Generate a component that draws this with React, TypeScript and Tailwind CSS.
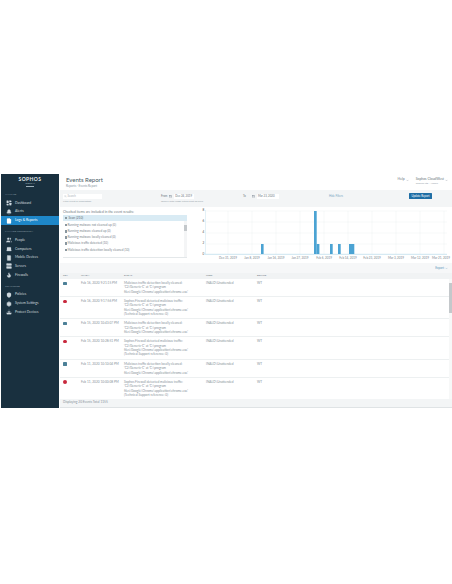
import { Bell, Laptop, LayoutDashboard, FileText, Flame, Server, Settings, Shield, Smartphone, Users, Download, ChevronDown, Search, Calendar } from "lucide-react";

const nav = [
  {
    title: "ANALYZE",
    items: [
      { label: "Dashboard", icon: LayoutDashboard },
      { label: "Alerts", icon: Bell },
      { label: "Logs & Reports", icon: FileText, active: true },
    ],
  },
  {
    title: "MANAGE PROTECTION",
    items: [
      { label: "People", icon: Users },
      { label: "Computers", icon: Laptop },
      { label: "Mobile Devices", icon: Smartphone },
      { label: "Servers", icon: Server },
      { label: "Firewalls", icon: Flame },
    ],
  },
  {
    title: "CONFIGURE",
    items: [
      { label: "Policies", icon: Shield },
      { label: "System Settings", icon: Settings },
      { label: "Protect Devices", icon: Download },
    ],
  },
];

const checks = [
  { label: "Running malware not cleaned up (0)", on: false },
  { label: "Running malware cleaned up (0)", on: false },
  { label: "Running malware locally cleaned (0)", on: false },
  { label: "Malicious traffic detected (10)", on: true },
  { label: "Malicious traffic detection locally cleaned (10)", on: true },
];

const cleaned = [
  "Malicious traffic detection locally cleaned:",
  "'C2/Generic-C' at 'C:\\program",
  "files\\Google\\Chrome\\application\\chrome.exe'",
];
const detected = [
  "Sophos Firewall detected malicious traffic:",
  "'C2/Generic-C' at 'C:\\program",
  "files\\Google\\Chrome\\application\\chrome.exe'",
  "(Technical Support reference: 0)",
];

const rows = [
  { date: "Feb 16, 2020 9:21:15 PM", kind: "clean" },
  { date: "Feb 16, 2020 9:17:56 PM", kind: "bad" },
  { date: "Feb 15, 2020 10:43:07 PM", kind: "clean" },
  { date: "Feb 15, 2020 10:28:51 PM", kind: "bad" },
  { date: "Feb 11, 2020 10:10:04 PM", kind: "clean" },
  { date: "Feb 11, 2020 10:00:08 PM", kind: "bad" },
];

const dates = ["Dec 31, 2019", "Jan 8, 2019", "Jan 16, 2019", "Jan 27, 2019", "Feb 6, 2019", "Feb 14, 2019", "Feb 23, 2019", "Mar 3, 2019", "Mar 12, 2019", "Mar 21, 2019"];
const bars = [
  [262, 2.6, 10],
  [315, 2.7, 43],
  [317.7, 2.7, 10],
  [331, 2.7, 10],
  [339, 2.7, 10],
  [350, 5.3, 10],
];

function Chart() {
  return (
    <svg viewBox="203 210 249 54" className="h-[54px] w-[249px]">
      {[214, 225, 236, 247].map((y) => (
        <line key={y} x1="207" x2="448" y1={y} y2={y} stroke="#eceff1" strokeWidth="0.4" />
      ))}
      {[229, 253, 277, 301, 325, 349, 373, 397, 421, 445].map((x) => (
        <line key={x} x1={x} x2={x} y1="214" y2="257" stroke="#eceff1" strokeWidth="0.4" />
      ))}
      <line x1="206.5" x2="206.5" y1="213" y2="257" stroke="#c9e3ef" strokeWidth="0.5" />
      <line x1="206" x2="448" y1="257.3" y2="257.3" stroke="#a9d3e6" strokeWidth="0.6" />
      {bars.map(([x, w, h]) => (
        <rect key={x} x={x} y={257 - h} width={w} height={h} fill="#4ba3d3" />
      ))}
      {[
        ["8", 214],
        ["6", 225],
        ["4", 236],
        ["2", 247],
        ["0", 258],
      ].map(([t, y]) => (
        <text key={t} x="203.5" y={y} fontSize="3" fill="#555" fontFamily="Lato, sans-serif">
          {t}
        </text>
      ))}
      {dates.map((d, i) => (
        <text
          key={d}
          x={i === 9 ? 451 : 229 + i * 24}
          y="261.5"
          fontSize="3"
          textAnchor={i === 9 ? "end" : "middle"}
          fill="#7a868e"
          fontFamily="Lato, sans-serif"
        >
          {d}
        </text>
      ))}
    </svg>
  );
}

export default function App() {
  return (
    <div className="h-[584px] w-[452px] overflow-hidden bg-white pt-[174px] font-['Lato',sans-serif]">
      <div className="flex h-[234px]">
        {/* Sidebar */}
        <aside className="ml-px flex h-full w-[58px] shrink-0 flex-col bg-[#19303f] text-[#cfd8de]">
          <div className="flex h-[15px] flex-col items-center pt-[3px]">
            <span className="text-[5px] leading-[5px] font-bold tracking-[0.4px] text-[#e4e9ec]">SOPHOS</span>
            <span className="text-[2.2px] leading-[3px] text-[#9fb0ba]">CENTRAL</span>
            <span className="mt-[0.5px] h-[1px] w-[8px] bg-[#9fb0ba]" />
          </div>
          {nav.map((s) => (
            <div key={s.title} className="mb-[1px] pt-[1px]">
              <div className="mt-[1px] flex h-[8px] items-center pl-[4px] text-[2.6px] text-[#8a9ba6]">{s.title}</div>
              {s.items.map((it) => (
                <div key={it.label} className={`flex h-[8.7px] items-center gap-[3px] pl-[5px] text-[3.4px] ${it.active ? "bg-[#1e87c9] text-white" : ""}`}>
                  <it.icon className="h-[6px] w-[6px] fill-current" strokeWidth={1} />
                  <span>{it.label}</span>
                </div>
              ))}
            </div>
          ))}
        </aside>

        {/* Main */}
        <main className="flex min-w-0 flex-1 flex-col pl-px">
          <header className="flex h-[16px] justify-between pl-[6px] pr-[3px]">
            <div className="pt-[2px]">
              <h1 className="text-[6px] leading-[8px] text-[#4a5a64]">Events Report</h1>
              <p className="text-[3px] leading-[4px] text-[#8a979f]">Reports · Events Report</p>
            </div>
            <div className="flex gap-[7px] pr-[1px] pt-[4px] text-[3.4px] text-[#6b7780]">
              <span className="flex h-[4px] items-center gap-[1px]">Help <ChevronDown className="h-[3px] w-[3px]" /></span>
              <div>
                <div className="flex h-[4px] items-center gap-[1px]">Sophos CloudWest <ChevronDown className="h-[3px] w-[3px]" /></div>
                <div className="text-[2.6px] text-[#9aa5ac]">Sophos Ltd - Admin</div>
              </div>
            </div>
          </header>

          <div className="flex h-[17px] items-start bg-[#f3f5f6] pl-[3px] pr-[20px] pt-[4px]">
            <div className="w-[98px]">
              <div className="flex h-[5px] w-[39px] items-center gap-[1px] bg-white pl-[1px] text-[2.8px] text-[#aab3b9]">
                <Search className="h-[2.5px] w-[2.5px]" /> Search
              </div>
              <div className="mt-px text-[2.5px] text-[#9aa5ac]">Filter event or description</div>
            </div>
            <div className="w-[82px]">
              <div className="flex items-center gap-[1px] text-[2.8px] text-[#6b7780]">
                <span>From</span>
                <Calendar className="ml-[1px] h-[3px] w-[3px]" />
                <span className="ml-[1px] flex h-[5px] w-[20px] items-center bg-white pl-[1px]">Dec 24, 2019</span>
              </div>
              <div className="mt-px whitespace-nowrap text-[2.5px] text-[#9aa5ac]">Specify date range within past 90 days</div>
            </div>
            <div className="flex items-center gap-[1px] text-[2.8px] text-[#6b7780]">
              <span>To</span>
              <Calendar className="ml-[5px] h-[3px] w-[3px]" />
              <span className="ml-[1px] flex h-[5px] w-[22px] items-center bg-white pl-[1px]">Mar 23, 2020</span>
              <span className="ml-[49px] whitespace-nowrap text-[2.8px] text-[#7aa6c2]">Hide Filters</span>
            </div>
            <button className="ml-auto -mt-px flex h-[6px] w-[23px] items-center justify-center rounded-[0.5px] bg-[#1f6ea5] text-[2.8px] text-white">
              Update Report
            </button>
          </div>

          <div className="flex h-[56px] items-start">
            <div className="w-[142px] pl-[3px] pt-[3px]">
              <p className="text-[3.4px] leading-[4px] text-[#6b7780]">Checked items are included in the event results:</p>
              <div className="mt-[1px] h-[43px] w-[124px] overflow-hidden border-b border-[#e4e8ea]">
                <div className="flex h-[6px] items-center gap-[1.5px] bg-[#d9ebf4] pl-[1.5px] text-[3.2px] text-[#5d6b74]">
                  <span className="h-[2.5px] w-[2.5px] shrink-0 border-[0.4px] border-[#8a979f] bg-white" />
                  Scan (210)
                </div>
                <div className="flex">
                  <div className="flex-1 pl-[1.5px] pt-[1px]">
                    {checks.map((c) => (
                      <div key={c.label} className="flex h-[6.2px] items-center gap-[0.5px] text-[3.1px] text-[#7a868e]">
                        <span className={`h-[2.5px] w-[2.5px] shrink-0 border-[0.4px] border-[#8a979f] ${c.on ? "bg-[#555]" : "bg-white"}`} />
                        {c.label}
                      </div>
                    ))}
                  </div>
                  <div className="flex h-[37px] w-[3px] flex-col bg-[#f4f5f6] pt-[4px]">
                    <div className="h-[6px] bg-[#c4c8cb]" />
                  </div>
                </div>
              </div>
            </div>
            <Chart />
          </div>

          <div className="flex h-[9.5px] items-end justify-end bg-[#f6f7f8] pr-[4px] pb-[2px] text-[3px] text-[#5c96ba]">
            <span className="flex items-center gap-[1px]">Export <ChevronDown className="h-[3px] w-[3px]" /></span>
          </div>

          <div className="flex h-[6.5px] items-center bg-[#f1f3f4] text-[2.6px] text-[#6b7780]">
            <span className="w-[21px] pl-[3px]">SEV</span>
            <span className="w-[43px]">WHEN</span>
            <span className="w-[82px]">EVENT</span>
            <span className="w-[51px]">USER</span>
            <span>DEVICE</span>
          </div>

          <div className="flex min-h-0 flex-1">
            <div className="flex-1">
              {rows.map((r) => (
                <div key={r.date} className="flex border-b-[0.4px] border-[#edf0f1] py-[2px] text-[3.2px] leading-[4.35px] text-[#87929a]">
                  <span className="flex w-[21px] shrink-0 items-start pl-[3px] pt-[0.5px]">
                    {r.kind === "clean" ? (
                      <span className="h-[3.5px] w-[3.5px] shrink-0 rounded-[0.4px] bg-[#4c8097]" />
                    ) : (
                      <span className="h-[3.5px] w-[3.5px] shrink-0 rounded-full bg-[#c8283d]" />
                    )}
                  </span>
                  <span className="w-[43px] whitespace-nowrap">{r.date}</span>
                  <span className="w-[82px]">
                    {(r.kind === "clean" ? cleaned : detected).map((l) => (
                      <div key={l} className="whitespace-nowrap">{l}</div>
                    ))}
                  </span>
                  <span className="w-[51px]">INALO\Unattended</span>
                  <span>WT</span>
                </div>
              ))}
            </div>
            <div className="flex w-[3px] flex-col bg-[#f7f8f8]">
              <div className="mt-[4px] h-[30px] bg-[#c4c8cb]" />
            </div>
          </div>

          <div className="flex h-[9.5px] items-center border-b-[0.5px] border-[#dfe3e5] bg-[#f3f5f6] pl-[3px] text-[3.2px] text-[#87929a]">
            Displaying 20 Events Total 1155
          </div>
        </main>
      </div>
    </div>
  );
}
